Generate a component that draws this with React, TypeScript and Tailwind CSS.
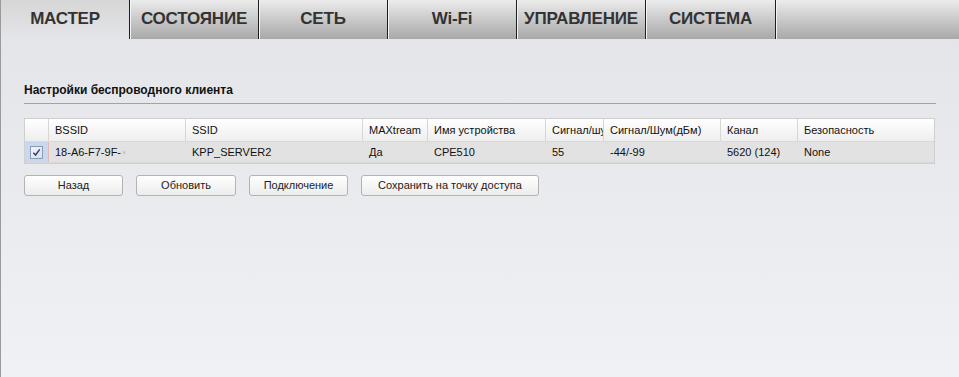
const tabs = ['МАСТЕР', 'СОСТОЯНИЕ', 'СЕТЬ', 'Wi-Fi', 'УПРАВЛЕНИЕ', 'СИСТЕМА'];

const cols = [
  { label: '', w: 'w-[24px]' },
  { label: 'BSSID', w: 'w-[137px]' },
  { label: 'SSID', w: 'w-[177px]' },
  { label: 'MAXtream', w: 'w-[65px]' },
  { label: 'Имя устройства', w: 'w-[118px]' },
  { label: 'Сигнал/шум', w: 'w-[58px]' },
  { label: 'Сигнал/Шум(дБм)', w: 'w-[117px]' },
  { label: 'Канал', w: 'w-[77px]' },
  { label: 'Безопасность', w: 'flex-1' },
];

const row = ['18-A6-F7-9F-', 'KPP_SERVER2', 'Да', 'CPE510', '55', '-44/-99', '5620 (124)', 'None'];

export default function App() {
  return (
    <div className="flex h-[377px] w-[959px] flex-col border-l border-[#9a9a9a] bg-gradient-to-b from-[#e3e4e8] to-[#f0f1f5] font-['Liberation_Sans',Arial,sans-serif]">
      {/* ── Вкладки ── */}
      <div className="flex h-[39px] bg-gradient-to-b from-[#ececec] to-[#a8a8a8]">
        {tabs.map((t, i) => (
          <div
            key={t}
            className={`flex h-full w-[129px] items-center justify-center border-r border-r-[#1e1e1e] shadow-[1px_0_0_#f4f4f4] text-[17px] font-bold tracking-[-0.2px] text-[#333] ${
              i === 0 ? 'bg-gradient-to-b from-[#d6d6d6] to-[#e4e5e9]' : ''
            } ${i === 5 ? 'w-[130px]' : ''}`}
          >
            <span className="-mt-[1px]">{t}</span>
          </div>
        ))}
      </div>

      {/* ── Контент ── */}
      <div className="px-[23px] pt-[42px]">
        <h2 className="border-b border-[#a3a3a3] pb-[4px] text-[12px] font-bold text-[#111]">
          Настройки беспроводного клиента
        </h2>

        <div className="mt-[14px] w-[911px] border border-[#cfcfcf] text-[11px] text-[#111]">
          <div className="flex h-[22px] bg-gradient-to-b from-[#ffffff] to-[#eeeeee]">
            {cols.map((c, i) => (
              <div
                key={i}
                className={`${c.w} flex shrink-0 items-center overflow-hidden whitespace-nowrap border-r border-[#d6d6d6] pl-[6px] last:border-r-0 ${
                  i === 0 ? 'pl-0' : ''
                }`}
              >
                {c.label}
              </div>
            ))}
          </div>
          <div className="flex h-[22px] border-t border-[#cfcfcf] border-b border-b-[#cfcfcf] border-dotted bg-[#e2e2e2]">
            <div className="flex w-[24px] shrink-0 items-center justify-center border-r border-[#e5b8b8] bg-[#c8d8ee]">
              <span className="flex h-[13px] w-[13px] items-center justify-center border border-[#8a9bb5] bg-gradient-to-br from-[#f4f6fa] to-[#d9dee8]">
                <svg viewBox="0 0 10 10" className="h-[9px] w-[9px]">
                  <path d="M1.5 5.2 L4 7.8 L8.6 1.6" fill="none" stroke="#2a3f8a" strokeWidth="1.6" />
                </svg>
              </span>
            </div>
            {row.map((v, i) => (
              <div
                key={i}
                className={`${cols[i + 1].w} flex shrink-0 items-center whitespace-nowrap pl-[6px]`}
              >
                {v}
                {i === 0 && <span className="ml-[1px] text-[#c8c8c8]">•</span>}
              </div>
            ))}
          </div>
        </div>

        <div className="mt-[11px] flex gap-[13px] text-[11px] text-[#222]">
          <Btn w="w-[99px]">Назад</Btn>
          <Btn w="w-[100px]">Обновить</Btn>
          <Btn w="w-[99px]">Подключение</Btn>
          <Btn w="w-[178px]">Сохранить на точку доступа</Btn>
        </div>
      </div>
    </div>
  );
}

function Btn({ w, children }: { w: string; children: React.ReactNode }) {
  return (
    <button
      type="button"
      className={`${w} h-[21px] rounded-[3px] border border-[#b3b3b3] bg-gradient-to-b from-[#ffffff] to-[#ececec]`}
    >
      {children}
    </button>
  );
}
